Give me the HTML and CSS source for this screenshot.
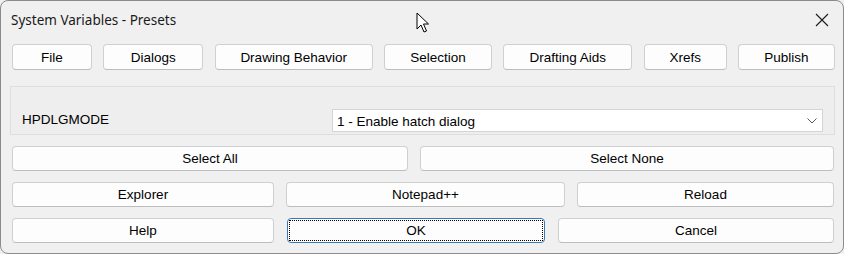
FILE: index.html
```html
<!DOCTYPE html>
<html>
<head>
<meta charset="utf-8">
<link rel="stylesheet" href="styles.css">
</head>
<body>
<div class="window">
  <div class="titlebar">
    <span class="title">System Variables - Presets</span>
    <svg class="close" width="14" height="14" viewBox="0 0 14 14"><path d="M1 1 L13 13 M13 1 L1 13" stroke="#1a1a1a" stroke-width="1.1" fill="none"/></svg>
  </div>
  <div class="tabs">
    <button class="btn w-file">File</button>
    <button class="btn w-dialogs">Dialogs</button>
    <button class="btn w-drawing">Drawing Behavior</button>
    <button class="btn w-selection">Selection</button>
    <button class="btn w-drafting">Drafting Aids</button>
    <button class="btn w-xrefs">Xrefs</button>
    <button class="btn w-publish">Publish</button>
  </div>
  <div class="panel">
    <span class="varname">HPDLGMODE</span>
    <div class="combo">
      <span>1 - Enable hatch dialog</span>
      <svg width="10" height="6" viewBox="0 0 10 6"><path d="M0.5 0.5 L5 5 L9.5 0.5" stroke="#555" stroke-width="1" fill="none"/></svg>
    </div>
  </div>
  <div class="row row2">
    <button class="btn">Select All</button>
    <button class="btn">Select None</button>
  </div>
  <div class="row row3">
    <button class="btn">Explorer</button>
    <button class="btn">Notepad++</button>
    <button class="btn">Reload</button>
  </div>
  <div class="row row4">
    <button class="btn">Help</button>
    <button class="btn focus"><span class="dots">OK</span></button>
    <button class="btn">Cancel</button>
  </div>
  <svg class="cursor" width="14" height="22" viewBox="0 0 14 22"><path d="M1 1 L1 17 L5 13 L8 20 L10.5 19 L7.5 12 L12.5 12 Z" fill="#fff" stroke="#000" stroke-width="1" stroke-linejoin="round"/></svg>
</div>
</body>
</html>
```

FILE: styles.css
```css
html, body {
  margin: 0;
  padding: 0;
  background: #f0f0f0;
}
.window {
  position: relative;
  width: 844px;
  height: 254px;
  box-sizing: border-box;
  border: 1px solid #8c8c8c;
  border-radius: 8px;
  background: #f0f0f0;
  padding: 0 9px 0 11px;
  font-family: "Liberation Sans", Arial, sans-serif;
  font-size: 13.5px;
  color: #000;
}
.titlebar {
  height: 38px;
  display: flex;
  align-items: center;
  justify-content: space-between;
  margin-left: -1px;
  margin-right: 5px;
}
.title {
  font-family: "Noto Sans", "Open Sans", sans-serif;
  font-size: 13.5px;
  color: #1a1a1a;
}
.close {
  display: block;
}
.btn {
  box-sizing: border-box;
  height: 26px;
  margin: 0;
  padding: 0;
  background: #fdfdfd;
  border: 1px solid #d0d0d0;
  border-bottom-color: #bdbdbd;
  border-radius: 4px;
  font-family: "Liberation Sans", Arial, sans-serif;
  font-size: 13.5px;
  color: #000;
}
.tabs {
  margin-top: 5px;
  display: flex;
  justify-content: space-between;
  width: 823px;
}
.w-file { width: 80px; }
.w-dialogs { width: 100px; }
.w-drawing { width: 158px; }
.w-selection { width: 108px; }
.w-drafting { width: 129px; }
.w-xrefs { width: 83px; }
.w-publish { width: 97px; }
.panel {
  margin-top: 16px;
  margin-left: -2px;
  width: 825px;
  height: 49px;
  box-sizing: border-box;
  border: 1px solid #dedede;
  background: #eeeeee;
  display: flex;
  align-items: flex-end;
  padding: 0 11px 2px 11px;
  justify-content: space-between;
}
.varname {
  color: #000;
  align-self: flex-end;
  margin-bottom: 5px;
}
.combo {
  width: 491px;
  height: 23px;
  box-sizing: border-box;
  background: #fff;
  border: 1px solid #d4d4d4;
  display: flex;
  align-items: center;
  justify-content: space-between;
  padding: 2px 5px 0 4px;
  color: #000;
}
.combo svg {
  margin-top: -2px;
}
.row {
  display: grid;
  width: 822px;
}
.row .btn {
  height: 25px;
  width: 100%;
}
.row2 {
  margin-top: 11px;
  grid-template-columns: 396px 414px;
  column-gap: 12px;
}
.row3 {
  margin-top: 11px;
  grid-template-columns: 262px 279px 257px;
  column-gap: 12px;
}
.row4 {
  margin-top: 11px;
  grid-template-columns: 262px 258px 276px;
  column-gap: 13px;
}
.btn.focus {
  border: 1px solid #3a77b8;
  padding: 1px;
}
.dots {
  display: flex;
  align-items: center;
  justify-content: center;
  width: 100%;
  height: 100%;
  box-sizing: border-box;
  border: 1px dotted #000;
}
.cursor {
  position: absolute;
  left: 415px;
  top: 11px;
}
```
